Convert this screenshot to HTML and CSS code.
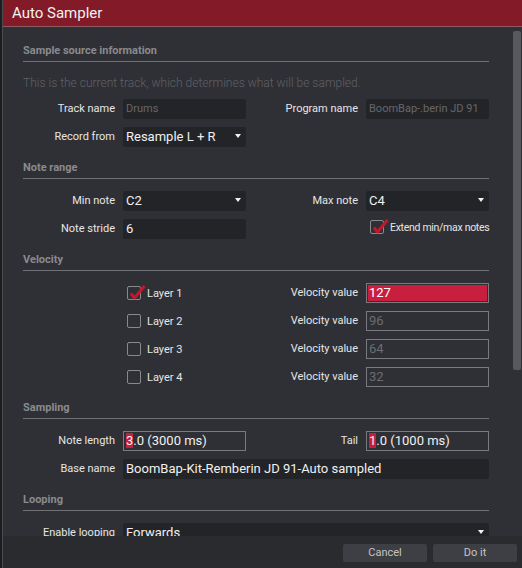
FILE: index.html
```html
<!DOCTYPE html>
<html lang="en">
<head>
    <meta charset="UTF-8">
    <title>Auto Sampler</title>
    <link rel="stylesheet" href="styles.css">
</head>
<body>

<div class="window">
    <div class="titlebar">Auto Sampler</div>

    <div class="content">
        <div class="scrollbar"></div>

        <div class="section first">
            <div class="section-title">Sample source information</div>
            <p class="hint">This is the current track, which determines what will be sampled.</p>
            <div class="rows tight">
                <div class="label">Track name</div>
                <div class="field dim">Drums</div>
                <div class="label">Program name</div>
                <div class="field dim">BoomBap-.berin JD 91</div>

                <div class="label">Record from</div>
                <div class="field select">Resample L + R<span class="arrow"></span></div>
            </div>
        </div>

        <div class="section">
            <div class="section-title">Note range</div>
            <div class="rows">
                <div class="label">Min note</div>
                <div class="field select">C2<span class="arrow"></span></div>
                <div class="label">Max note</div>
                <div class="field select">C4<span class="arrow"></span></div>

                <div class="label">Note stride</div>
                <div class="field">6</div>
                <div></div>
                <div class="check-row top">
                    <span class="box checked"><svg width="18" height="16" viewBox="0 0 18 16"><path d="M3 8.5 L6.5 13 L16.5 1" fill="none" stroke="#c3182c" stroke-width="3" stroke-linejoin="round"/></svg></span>
                    Extend min/max notes
                </div>
            </div>
        </div>

        <div class="section">
            <div class="section-title">Velocity</div>
            <div class="rows">
                <div></div>
                <div class="check-row">
                    <span class="box checked"><svg width="18" height="16" viewBox="0 0 18 16"><path d="M3 8.5 L6.5 13 L16.5 1" fill="none" stroke="#c3182c" stroke-width="3" stroke-linejoin="round"/></svg></span>
                    Layer 1
                </div>
                <div class="label">Velocity value</div>
                <div class="field outline active">127</div>

                <div></div>
                <div class="check-row"><span class="box"></span>Layer 2</div>
                <div class="label">Velocity value</div>
                <div class="field outline dim-value">96</div>

                <div></div>
                <div class="check-row"><span class="box"></span>Layer 3</div>
                <div class="label">Velocity value</div>
                <div class="field outline dim-value">64</div>

                <div></div>
                <div class="check-row"><span class="box"></span>Layer 4</div>
                <div class="label">Velocity value</div>
                <div class="field outline dim-value">32</div>
            </div>
        </div>

        <div class="section">
            <div class="section-title">Sampling</div>
            <div class="rows">
                <div class="label">Note length</div>
                <div class="field outline"><span class="sel">3</span>.0 (3000 ms)</div>
                <div class="label">Tail</div>
                <div class="field outline"><span class="sel">1</span>.0 (1000 ms)</div>

                <div class="label">Base name</div>
                <div class="field wide">BoomBap-Kit-Remberin JD 91-Auto sampled</div>
            </div>
        </div>

        <div class="section">
            <div class="section-title">Looping</div>
            <div class="rows">
                <div class="label">Enable looping</div>
                <div class="field select wide">Forwards<span class="arrow"></span></div>
            </div>
        </div>
    </div>

    <div class="footer">
        <div class="button">Cancel</div>
        <div class="button">Do it</div>
    </div>
</div>

</body>
</html>
```

FILE: styles.css
```css
body {
    margin: 0;
    background-color: #1d1d1f;
    font-family: Roboto, "Liberation Sans", sans-serif;
}

.window {
    margin-left: 2px;
    border-left: 1px solid #4b4b50;
    height: 568px;
    display: flex;
    flex-direction: column;
    background-color: #2f3035;
}

.titlebar {
    height: 26px;
    line-height: 26px;
    padding-left: 9px;
    background-color: #821a28;
    border-bottom: 1px solid #8e5b63;
    color: #f2f2f2;
    font-size: 15px;
}

.content {
    position: relative;
    flex: 1;
    overflow: hidden;
    padding: 17px 0 0 20px;
}

.scrollbar {
    position: absolute;
    top: 4px;
    right: 1px;
    width: 8px;
    height: 339px;
    background-color: #58585d;
    border-radius: 2px;
}

.section {
    width: 466px;
    margin-top: 14px;
}

.section.first {
    margin-top: 0;
}

.section-title {
    font-size: 11px;
    font-weight: bold;
    line-height: 13px;
    color: #8a8a8e;
    padding-bottom: 4px;
    border-bottom: 1px solid #727276;
}

.hint {
    margin: 14px 0 0;
    font-size: 12px;
    font-weight: 300;
    line-height: 14px;
    color: #5f6065;
}

.rows {
    display: grid;
    grid-template-columns: 100px 123px 120px 123px;
    grid-auto-rows: 20px;
    row-gap: 8px;
    margin-top: 12px;
}

.rows.tight {
    margin-top: 9px;
}

.label {
    padding-right: 8px;
    text-align: right;
    font-size: 11px;
    line-height: 20px;
    color: #e6e6e6;
    white-space: nowrap;
}

.field {
    box-sizing: border-box;
    padding-left: 3px;
    background-color: #232428;
    border-radius: 2px;
    font-size: 13px;
    line-height: 20px;
    color: #f0f0f0;
    white-space: nowrap;
    overflow: hidden;
}

.field.dim {
    font-size: 11px;
    color: #66676b;
}

.field.wide {
    grid-column: 2 / 5;
}

.field.select {
    display: flex;
    justify-content: space-between;
    align-items: flex-start;
    padding-right: 5px;
}

.arrow {
    margin-top: 7px;
    width: 0;
    height: 0;
    border-left: 3px solid transparent;
    border-right: 3px solid transparent;
    border-top: 4px solid #f2f2f2;
}

.field.outline {
    border: 1px solid #7a7a7e;
    border-radius: 0;
    background-color: transparent;
    line-height: 18px;
    padding-left: 2px;
}

.field.active {
    background-color: #c81f3e;
    box-shadow: inset 0 0 0 1px #2f3035;
    color: #ffffff;
}

.field.dim-value {
    color: #6c6d71;
}

.sel {
    background-color: #c81f3e;
}

.check-row {
    display: flex;
    align-items: center;
    padding-left: 4px;
    font-size: 11px;
    color: #e6e6e6;
    white-space: nowrap;
}

.check-row.top {
    align-items: flex-start;
    line-height: 15px;
    margin-top: 1px;
    font-size: 10.5px;
    letter-spacing: -0.3px;
}

.box {
    position: relative;
    box-sizing: border-box;
    width: 14px;
    height: 14px;
    margin-right: 6px;
    border: 1px solid #8a8a8e;
    border-radius: 2px;
    flex-shrink: 0;
}

.box svg {
    position: absolute;
    left: 0;
    top: -2px;
}

.footer {
    height: 32px;
    box-sizing: border-box;
    padding: 8px 5px 0 0;
    display: flex;
    justify-content: flex-end;
    gap: 6px;
    background-color: #2a2b2f;
}

.button {
    width: 84px;
    height: 18px;
    line-height: 18px;
    text-align: center;
    font-size: 11px;
    color: #c4c4c6;
    background-color: #3e3f44;
    border-radius: 2px;
}
```
